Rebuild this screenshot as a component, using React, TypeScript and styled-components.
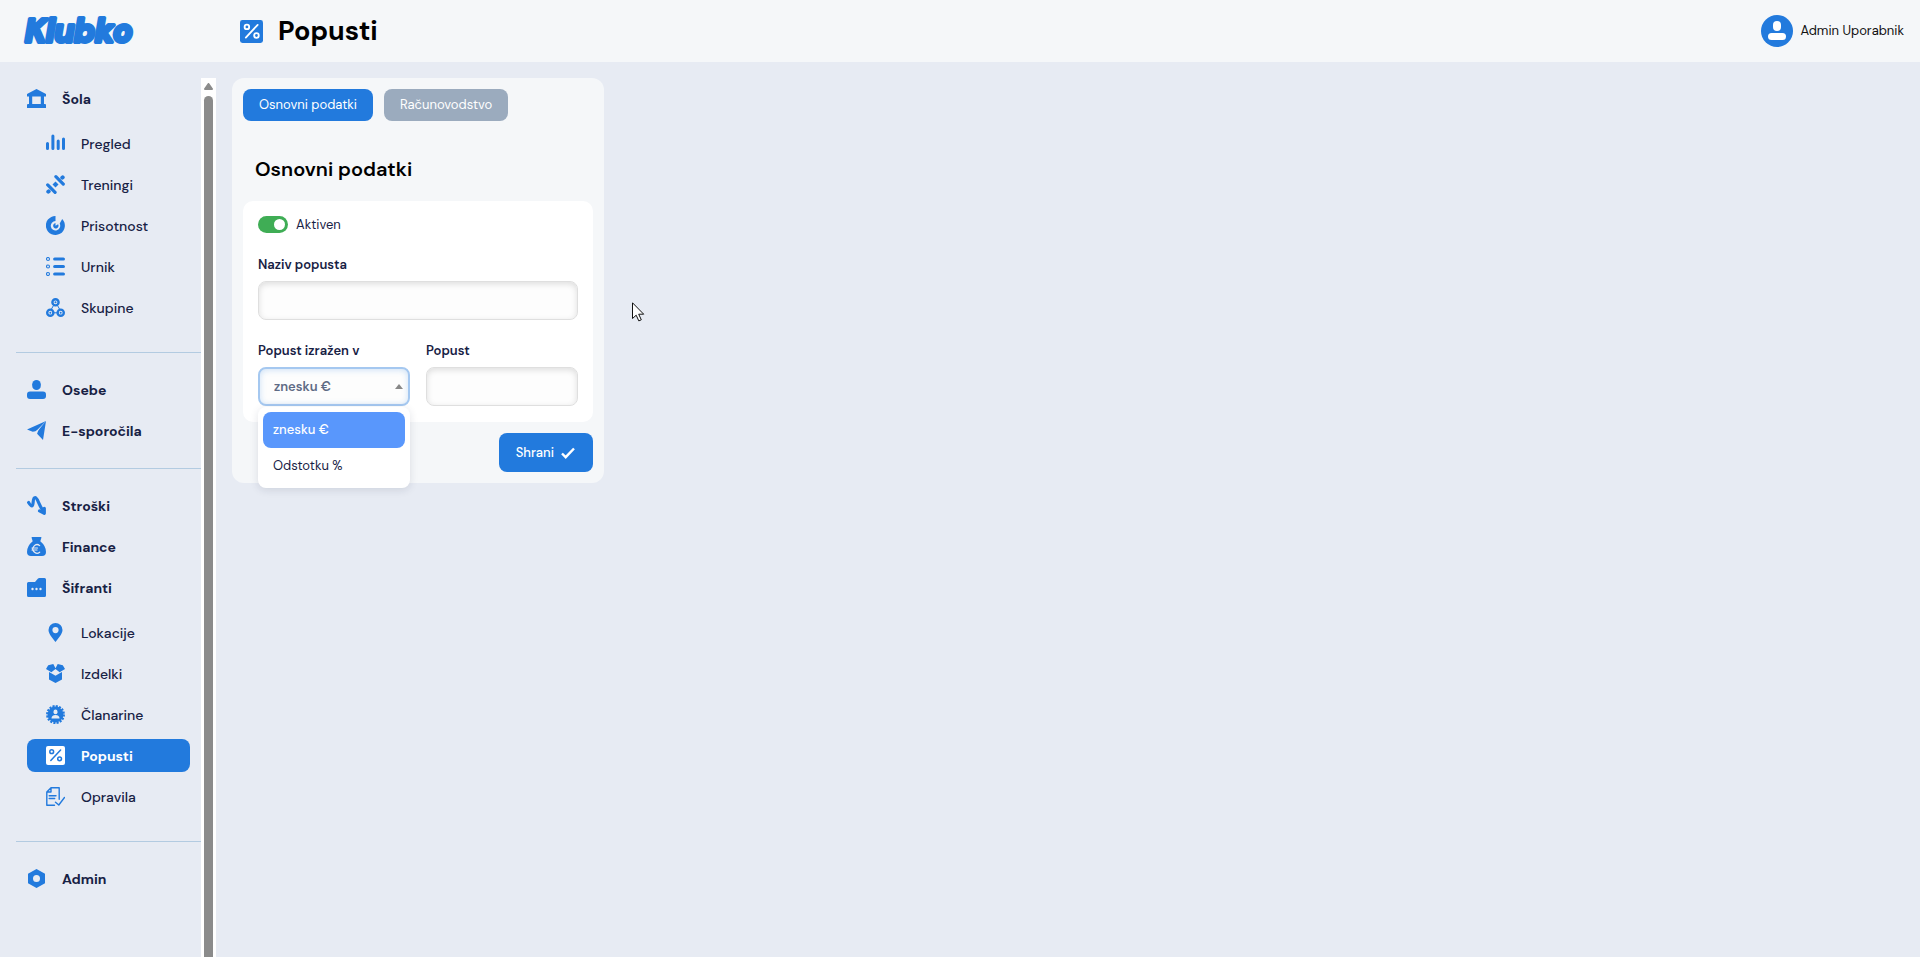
import React, { useState } from "react";
import styled, { createGlobalStyle, css } from "styled-components";

const c = {
  blue: "#227add",
  page: "#e7ebf3",
  panel: "#f5f7f9",
  ink: "#172144",
  line: "#b3cbe1",
  thumb: "#8b8b8b",
  muted: "#9babbe",
};

const GlobalStyle = createGlobalStyle`
  *, *::before, *::after { box-sizing: border-box; }
  body {
    margin: 0;
    background: ${c.page};
    color: ${c.ink};
    font-family: "DM Sans", Inter, "Liberation Sans", sans-serif;
    font-size: 13px;
    line-height: 20px;
  }
  button, input, select { font: inherit; }
`;

const Page = styled.div`
  display: flex;
  flex-direction: column;
  height: 100vh;
  overflow: hidden;
`;

const Header = styled.header`
  display: flex;
  flex: none;
  align-items: center;
  height: 62px;
  padding: 0 16px 0 24px;
  background: ${c.panel};
`;

const Logo = styled.a`
  width: 216px;
  height: 40px;
  text-decoration: none;
  svg { display: block; overflow: visible; }
`;

const PageTitle = styled.h1`
  display: flex;
  align-items: center;
  gap: 15px;
  margin: 0;
  color: #000;
  font-size: 27px;
  font-weight: 700;
  line-height: 36px;
  svg { color: ${c.blue}; }
`;

const Account = styled.button`
  display: flex;
  align-items: center;
  gap: 7px;
  margin-left: auto;
  padding: 0;
  border: 0;
  background: none;
  color: #111;
  cursor: pointer;
`;

const Body = styled.div`
  display: flex;
  flex: 1;
  min-height: 0;
  padding-top: 16px;
`;

const Sidebar = styled.aside`
  display: flex;
  flex: none;
  width: 216px;
  padding-left: 16px;
`;

const Nav = styled.nav`
  flex: 1;
  overflow: hidden;
  padding-top: 4px;
`;

const NavGroup = styled.ul`
  display: flex;
  flex-direction: column;
  gap: 8px;
  margin: 0;
  padding: 0 11px 21px;
  list-style: none;

  & + & {
    padding-top: 20px;
    border-top: 1px solid ${c.line};
  }
`;

const SubList = styled.ul`
  display: flex;
  flex-direction: column;
  gap: 8px;
  margin: 0;
  padding: 12px 0 7px;
  list-style: none;
`;

const NavLink = styled.a<{ $sub?: boolean; $active?: boolean }>`
  display: flex;
  align-items: center;
  gap: 16px;
  height: 33px;
  border-radius: 8px;
  color: ${c.ink};
  font-size: 14px;
  font-weight: 700;
  text-decoration: none;
  svg { flex: none; color: ${c.blue}; }
  ${(p) => p.$sub && css`
    padding-left: 19px;
    font-weight: 500;
  `}
  ${(p) => p.$active && css`
    background: ${c.blue};
    color: #fff;
    font-weight: 700;
    svg { color: #fff; }
  `}
`;

const ScrollTrack = styled.div`
  display: flex;
  flex: none;
  flex-direction: column;
  align-items: center;
  gap: 6px;
  width: 15px;
  padding-top: 5px;
  background: #fff;
`;

const ScrollThumb = styled.div`
  flex: 1;
  width: 9px;
  border-radius: 5px 5px 0 0;
  background: ${c.thumb};
`;

const Main = styled.main`
  flex: 1;
  padding: 0 16px;
`;

const Panel = styled.form`
  width: 372px;
  max-width: 100%;
  padding: 11px;
  border-radius: 12px;
  background: ${c.panel};
`;

const Tabs = styled.div`
  display: flex;
  gap: 11px;
`;

const Tab = styled.button<{ $active?: boolean }>`
  height: 32px;
  padding: 0 16px;
  border: 0;
  border-radius: 8px;
  background: ${(p) => (p.$active ? c.blue : c.muted)};
  color: #fff;
  cursor: pointer;
`;

const SectionTitle = styled.h2`
  margin: 32px 12px 16px;
  color: #000;
  font-size: 20px;
  font-weight: 600;
  line-height: 32px;
`;

const Card = styled.section`
  padding: 15px 15px 16px;
  border-radius: 10px;
  background: #fff;
`;

const Switch = styled.label`
  display: flex;
  align-items: center;
  gap: 8px;
  height: 17px;
  cursor: pointer;
`;

const SwitchInput = styled.input`
  appearance: none;
  display: flex;
  align-items: center;
  width: 30px;
  height: 17px;
  margin: 0;
  padding: 0 3px;
  border-radius: 9px;
  background: ${c.muted};

  &::before {
    content: "";
    width: 11px;
    height: 11px;
    border-radius: 50%;
    background: #fff;
  }
  &:checked {
    justify-content: flex-end;
    background: #3fad55;
  }
`;

const Fields = styled.div`
  display: grid;
  grid-template-columns: 1fr 1fr;
  gap: 21px 16px;
  margin-top: 22px;
`;

const Field = styled.div<{ $wide?: boolean }>`
  position: relative;
  display: flex;
  flex-direction: column;
  gap: 6px;
  min-width: 0;
  ${(p) => p.$wide && "grid-column: 1 / -1;"}
`;

const Label = styled.label`
  font-size: 13px;
  font-weight: 600;
`;

const control = css`
  width: 100%;
  height: 39px;
  padding: 0 16px;
  border: 1px solid #dfdfdf;
  border-radius: 8px;
  outline: none;
  background: #fdfdfd;
  box-shadow: inset 0 2px 6px rgba(0, 0, 0, 0.13);
  color: ${c.ink};
`;

const TextInput = styled.input`
  ${control}
`;

const SelectBox = styled.div`
  position: relative;
  display: flex;
  align-items: center;
`;

const Select = styled.select`
  ${control}
  appearance: none;
  padding: 0 14px;
  border: 2px solid #a5c8f0;
  box-shadow: inset 0 1px 6px rgba(34, 122, 221, 0.22);
  color: #5f6b85;
  font-weight: 600;
`;

const Caret = styled.span`
  position: absolute;
  right: 7px;
  border: 4px solid transparent;
  border-top: 0;
  border-bottom: 5px solid #888;
  pointer-events: none;
`;

const Menu = styled.ul`
  position: absolute;
  top: 100%;
  right: 0;
  left: 0;
  z-index: 2;
  margin: 1px 0 0;
  padding: 5px 5px 4px;
  border-radius: 8px;
  background: #fff;
  box-shadow: 0 2px 8px rgba(23, 33, 68, 0.12);
  list-style: none;
`;

const MenuItem = styled.li<{ $selected?: boolean }>`
  padding: 8px 10px;
  border-radius: 8px;
  cursor: pointer;
  ${(p) => p.$selected && "background: #5997fc; color: #fff; font-weight: 500;"}
`;

const Actions = styled.div`
  display: flex;
  justify-content: flex-end;
  margin-top: 11px;
`;

const SaveButton = styled.button`
  display: flex;
  align-items: center;
  gap: 7px;
  height: 39px;
  padding: 0 18px 0 17px;
  border: 0;
  border-radius: 8px;
  background: ${c.blue};
  color: #fff;
  font-weight: 500;
  cursor: pointer;
`;

const Pointer = styled.svg`
  position: absolute;
  top: 302px;
  left: 632px;
`;

const Icon = ({ children, size = 19 }: { children: React.ReactNode; size?: number }) => (
  <svg width={size} height={size} viewBox="0 0 19 19" fill="currentColor" aria-hidden="true">
    {children}
  </svg>
);

const line = { fill: "none", stroke: "currentColor", strokeLinecap: "round", strokeLinejoin: "round" } as const;

const icons: Record<string, React.ReactNode> = {
  school: <path fillRule="evenodd" d="M9.5 0 19 5v2.6h-2V15h1q1 0 1 1v3H0v-3q0-1 1-1h1V7.600H0V5ZM5.200 7.600V15h8.600V7.600Z" />,
  chart: (
    <g {...line} strokeWidth="3">
      <path d="M1.500 9.500v5M6.900 2v12.500M12.200 7v7.500M17.500 5v9.500" />
    </g>
  ),
  dumbbell: (
    <g {...line} strokeWidth="3.200">
      <path d="M1.700 9.900 9.100 17.300M9.900 1.700l7.400 7.400" />
      <path d="M2.300 16.700l.400-.400M16.300 2.700l.400-.400" strokeWidth="4" />
      <path d="m8 11 3-3" strokeWidth="4.200" strokeLinecap="butt" />
    </g>
  ),
  target: (
    <>
      <path d="M9.500 0v5a4.700 4.700 0 1 0 4.200 2.600L16.200 2.900A9.500 9.500 0 1 1 9.500 0Z" />
      <path d="M9.500 7v2.700l2.600-1.500a2.700 2.700 0 1 1-2.600-1.200Z" />
    </>
  ),
  list: (
    <>
      <g fill="none" stroke="currentColor" strokeWidth="1.100">
        <circle cx="2" cy="2" r="1.500" /><circle cx="2" cy="9.500" r="1.500" /><circle cx="2" cy="17" r="1.500" />
      </g>
      <path {...line} strokeWidth="3.200" d="M8.700 2h8.700M8.700 9.500h8.700M8.700 17h8.700" />
    </>
  ),
  groups: (
    <>
      <path {...line} strokeWidth="1" d="M7.500 7.500 5.500 11M11.500 7.500l2 3.500M7 14.800h5" />
      <g fill="none" stroke="currentColor" strokeWidth="2.400">
        <circle cx="9.500" cy="4.300" r="3.100" /><circle cx="4.300" cy="14.700" r="3.100" /><circle cx="14.700" cy="14.700" r="3.100" />
      </g>
      <circle cx="9.500" cy="4.300" r="1" /><circle cx="4.300" cy="14.700" r="1" /><circle cx="14.700" cy="14.700" r="1" />
    </>
  ),
  person: (
    <>
      <rect x="5.200" y="0" width="8.600" height="10" rx="4.300" />
      <rect x="0" y="11.500" width="19" height="7.500" rx="3" />
    </>
  ),
  plane: (
    <>
      <path d="M19 0 0 8.500l5.700 2.200q3 0 5-2.200L19 0Z" />
      <path d="M19 0 16 19l-5.900-6.200q.3-2.500 2.500-5L19 0Z" />
    </>
  ),
  trend: (
    <g {...line} strokeWidth="3.200">
      <path d="M1.600 6.500c1.500 2.500 2.300 3.800 3.600 3.300C6.800 9 5.400 1.800 8 1.700c2.500-.2 3 5.500 8.500 14" />
      <path d="M12.500 14.900 17.300 17.300V12.300" />
    </g>
  ),
  money: (
    <>
      <path d="M5 0h9q.6 0 .4.700L13.300 4.300Q19 9 19 15q0 4-4 4H4q-4 0-4-4Q0 9 5.700 4.300L4.600.7Q4.500 0 5 0Z" />
      <path fill="none" stroke={c.page} strokeWidth="1.200" strokeLinecap="round" d="M12.700 8.600a4.200 4.200 0 1 0 0 6.600M5 11h5.500M5 13h5" />
    </>
  ),
  folder: (
    <>
      <path d="M1.500 4H8l3-3.400Q11.500 0 12.300 0h5.200Q19 0 19 1.500v16q0 1.500-1.500 1.500h-16Q0 19 0 17.500v-12Q0 4 1.500 4Z" />
      <g fill={c.page}><circle cx="5.500" cy="11" r="1.200" /><circle cx="9.500" cy="11" r="1.200" /><circle cx="13.500" cy="11" r="1.200" /></g>
    </>
  ),
  pin: <path fillRule="evenodd" d="M9.500 0a7 7 0 0 1 7 7c0 4-4.500 8.500-7 12-2.500-3.500-7-8-7-12a7 7 0 0 1 7-7Zm0 4a3.100 3.100 0 1 0 0 6.200 3.100 3.100 0 0 0 0-6.200Z" />,
  box: (
    <>
      <path d="M2.200 1.300 7.300 0 9.500 4.300 11.700 0l5.100 1.300L19 5l-5.400 3.200L9.500 5 5.400 8.200 0 5Z" />
      <path d="M3 8l2.300 1.300 4.200 2.400 4.200-2.400L16 8v7.500L9.500 19 3 15.500Z" />
    </>
  ),
  badge: (
    <>
      <circle cx="9.500" cy="9.500" r="7.900" />
      <circle cx="9.500" cy="9.500" r="8.300" fill="none" stroke="currentColor" strokeWidth="2.300" strokeDasharray="2.100 1.160" />
      <g fill={c.page}><rect x="7.500" y="4.500" width="4" height="4.800" rx="2" /><path d="M5.500 13.500q0-3.500 4-3.500t4 3.500Z" /></g>
    </>
  ),
  document: (
    <g {...line} strokeWidth="1.400">
      <path d="M8.500 18.300H.800V5L5 .700h8.200v11.500M5 .900V5H1M3.200 8.800H10M3.200 11.500h5.500" />
      <path d="m9.500 15.200 3.300 2.800L18.500 10.500" />
    </g>
  ),
  nut: <path fillRule="evenodd" d="M9.500 0 18 4.800v9.400L9.500 19 1 14.200V4.800Zm0 6a3.500 3.500 0 1 0 0 7 3.500 3.500 0 0 0 0-7Z" />,
};

const Percent = ({ ink, size = 19 }: { ink: string; size?: number }) => (
  <Icon size={size}>
    <rect width="19" height="19" rx="2" />
    <g fill="none" stroke={ink} strokeWidth="1.500" strokeLinecap="round">
      <circle cx="5.700" cy="5.700" r="1.900" /><circle cx="13.600" cy="12.800" r="1.900" />
      <path d="M14.600 4 4.800 14.500" />
    </g>
  </Icon>
);

type Item = { icon: string; label: string; children?: Item[] };

const groups: Item[][] = [
  [
    {
      icon: "school", label: "Šola", children: [
        { icon: "chart", label: "Pregled" },
        { icon: "dumbbell", label: "Treningi" },
        { icon: "target", label: "Prisotnost" },
        { icon: "list", label: "Urnik" },
        { icon: "groups", label: "Skupine" },
      ],
    },
  ],
  [{ icon: "person", label: "Osebe" }, { icon: "plane", label: "E-sporočila" }],
  [
    { icon: "trend", label: "Stroški" },
    { icon: "money", label: "Finance" },
    {
      icon: "folder", label: "Šifranti", children: [
        { icon: "pin", label: "Lokacije" },
        { icon: "box", label: "Izdelki" },
        { icon: "badge", label: "Članarine" },
        { icon: "percent", label: "Popusti" },
        { icon: "document", label: "Opravila" },
      ],
    },
  ],
  [{ icon: "nut", label: "Admin" }],
];

const NavEntry = ({ item, sub }: { item: Item; sub?: boolean }) => {
  const active = item.icon === "percent";
  return (
    <li>
      <NavLink href="#" $sub={sub} $active={active} aria-current={active ? "page" : undefined}>
        {active ? <Percent ink={c.blue} /> : <Icon>{icons[item.icon]}</Icon>}
        {item.label}
      </NavLink>
      {item.children && (
        <SubList>
          {item.children.map((child) => <NavEntry key={child.label} item={child} sub />)}
        </SubList>
      )}
    </li>
  );
};

const units = ["znesku €", "Odstotku %"];

export default function App() {
  const [unit, setUnit] = useState(units[0]);
  const [enabled, setEnabled] = useState(true);

  return (
    <Page>
      <GlobalStyle />
      <Header>
        <Logo href="#" aria-label="Klubko">
          <svg width="112" height="40" viewBox="0 0 112 40">
            <text
              x="1" y="31" fontFamily="'DM Sans', sans-serif" fontSize="32" fontWeight="700" fontStyle="italic"
              fill={c.blue} stroke={c.blue} strokeWidth="4" strokeLinejoin="round"
            >
              Klubko
            </text>
          </svg>
        </Logo>
        <PageTitle>
          <Percent ink="#fff" size={23} />
          Popusti
        </PageTitle>
        <Account type="button">
          <svg width="32" height="32" viewBox="0 0 32 32" aria-hidden="true">
            <circle cx="16" cy="16" r="16" fill={c.blue} />
            <rect x="12" y="6" width="8" height="10" rx="4" fill="#fff" />
            <rect x="7" y="18" width="18" height="7" rx="3.500" fill="#fff" />
          </svg>
          Admin Uporabnik
        </Account>
      </Header>

      <Body>
        <Sidebar>
          <Nav>
            {groups.map((group, i) => (
              <NavGroup key={i}>
                {group.map((item) => <NavEntry key={item.label} item={item} />)}
              </NavGroup>
            ))}
          </Nav>
          <ScrollTrack aria-hidden="true">
            <svg width="9" height="7" viewBox="0 0 9 7">
              <path d="M4.500 1 8 6H1Z" fill={c.thumb} stroke={c.thumb} strokeWidth="2" strokeLinejoin="round" />
            </svg>
            <ScrollThumb />
          </ScrollTrack>
        </Sidebar>

        <Main>
          <Panel onSubmit={(e) => e.preventDefault()}>
            <Tabs>
              <Tab type="button" $active>Osnovni podatki</Tab>
              <Tab type="button">Računovodstvo</Tab>
            </Tabs>
            <SectionTitle>Osnovni podatki</SectionTitle>
            <Card>
              <Switch>
                <SwitchInput type="checkbox" role="switch" checked={enabled} onChange={() => setEnabled(!enabled)} />
                Aktiven
              </Switch>
              <Fields>
                <Field $wide>
                  <Label htmlFor="name">Naziv popusta</Label>
                  <TextInput id="name" type="text" />
                </Field>
                <Field>
                  <Label htmlFor="unit">Popust izražen v</Label>
                  <SelectBox>
                    <Select id="unit" value={unit} onChange={(e) => setUnit(e.target.value)}>
                      {units.map((u) => <option key={u}>{u}</option>)}
                    </Select>
                    <Caret />
                  </SelectBox>
                  <Menu role="listbox" aria-label="Popust izražen v">
                    {units.map((u) => (
                      <MenuItem key={u} role="option" aria-selected={u === unit} $selected={u === unit} onClick={() => setUnit(u)}>
                        {u}
                      </MenuItem>
                    ))}
                  </Menu>
                </Field>
                <Field>
                  <Label htmlFor="amount">Popust</Label>
                  <TextInput id="amount" type="text" />
                </Field>
              </Fields>
            </Card>
            <Actions>
              <SaveButton type="submit">
                Shrani
                <svg width="14" height="12" viewBox="0 0 14 12" aria-hidden="true">
                  <path d="m1 6.500 3.700 3.700L13 1.500" fill="none" stroke="#fff" strokeWidth="2.400" />
                </svg>
              </SaveButton>
            </Actions>
          </Panel>
        </Main>
      </Body>

      <Pointer width="13" height="20" viewBox="0 0 13 20" aria-hidden="true">
        <path d="M.500.800v15.700l3.700-3.300 2.600 5.700 2.500-1.100-2.600-5.600h5Z" fill="#fff" stroke="#111" strokeLinejoin="round" />
      </Pointer>
    </Page>
  );
}
